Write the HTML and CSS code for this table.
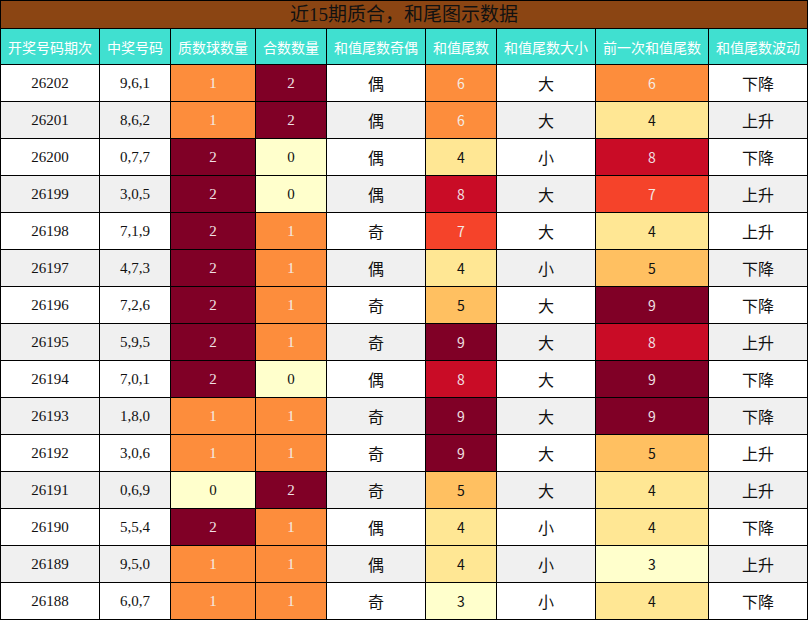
FILE: index.html
```html
<!DOCTYPE html>
<html lang="zh">
<head>
<meta charset="utf-8">
<title>近15期质合，和尾图示数据</title>
<link rel="stylesheet" href="styles.css">
</head>
<body>
<table class="grid">
  <colgroup>
    <col class="w99"><col class="w71"><col class="w85"><col class="w71"><col class="w99"><col class="w71"><col class="w99"><col class="w113"><col class="w99">
  </colgroup>
  <thead>
    <tr class="title-row"><th colspan="9" class="title">近15期质合，和尾图示数据</th></tr>
    <tr class="head-row">
      <th>开奖号码期次</th><th>中奖号码</th><th>质数球数量</th><th>合数数量</th><th>和值尾数奇偶</th><th>和值尾数</th><th>和值尾数大小</th><th>前一次和值尾数</th><th>和值尾数波动</th>
    </tr>
  </thead>
  <tbody>
    <tr><td class="num">26202</td><td class="num">9,6,1</td><td class="num k1">1</td><td class="num k2">2</td><td class="cn">偶</td><td class="dig t6">6</td><td class="cn">大</td><td class="dig t6">6</td><td class="cn">下降</td></tr>
    <tr><td class="num">26201</td><td class="num">8,6,2</td><td class="num k1">1</td><td class="num k2">2</td><td class="cn">偶</td><td class="dig t6">6</td><td class="cn">大</td><td class="dig t4">4</td><td class="cn">上升</td></tr>
    <tr><td class="num">26200</td><td class="num">0,7,7</td><td class="num k2">2</td><td class="num k0">0</td><td class="cn">偶</td><td class="dig t4">4</td><td class="cn">小</td><td class="dig t8">8</td><td class="cn">下降</td></tr>
    <tr><td class="num">26199</td><td class="num">3,0,5</td><td class="num k2">2</td><td class="num k0">0</td><td class="cn">偶</td><td class="dig t8">8</td><td class="cn">大</td><td class="dig t7">7</td><td class="cn">上升</td></tr>
    <tr><td class="num">26198</td><td class="num">7,1,9</td><td class="num k2">2</td><td class="num k1">1</td><td class="cn">奇</td><td class="dig t7">7</td><td class="cn">大</td><td class="dig t4">4</td><td class="cn">上升</td></tr>
    <tr><td class="num">26197</td><td class="num">4,7,3</td><td class="num k2">2</td><td class="num k1">1</td><td class="cn">偶</td><td class="dig t4">4</td><td class="cn">小</td><td class="dig t5">5</td><td class="cn">下降</td></tr>
    <tr><td class="num">26196</td><td class="num">7,2,6</td><td class="num k2">2</td><td class="num k1">1</td><td class="cn">奇</td><td class="dig t5">5</td><td class="cn">大</td><td class="dig t9">9</td><td class="cn">下降</td></tr>
    <tr><td class="num">26195</td><td class="num">5,9,5</td><td class="num k2">2</td><td class="num k1">1</td><td class="cn">奇</td><td class="dig t9">9</td><td class="cn">大</td><td class="dig t8">8</td><td class="cn">上升</td></tr>
    <tr><td class="num">26194</td><td class="num">7,0,1</td><td class="num k2">2</td><td class="num k0">0</td><td class="cn">偶</td><td class="dig t8">8</td><td class="cn">大</td><td class="dig t9">9</td><td class="cn">下降</td></tr>
    <tr><td class="num">26193</td><td class="num">1,8,0</td><td class="num k1">1</td><td class="num k1">1</td><td class="cn">奇</td><td class="dig t9">9</td><td class="cn">大</td><td class="dig t9">9</td><td class="cn">下降</td></tr>
    <tr><td class="num">26192</td><td class="num">3,0,6</td><td class="num k1">1</td><td class="num k1">1</td><td class="cn">奇</td><td class="dig t9">9</td><td class="cn">大</td><td class="dig t5">5</td><td class="cn">上升</td></tr>
    <tr><td class="num">26191</td><td class="num">0,6,9</td><td class="num k0">0</td><td class="num k2">2</td><td class="cn">奇</td><td class="dig t5">5</td><td class="cn">大</td><td class="dig t4">4</td><td class="cn">上升</td></tr>
    <tr><td class="num">26190</td><td class="num">5,5,4</td><td class="num k2">2</td><td class="num k1">1</td><td class="cn">偶</td><td class="dig t4">4</td><td class="cn">小</td><td class="dig t4">4</td><td class="cn">下降</td></tr>
    <tr><td class="num">26189</td><td class="num">9,5,0</td><td class="num k1">1</td><td class="num k1">1</td><td class="cn">偶</td><td class="dig t4">4</td><td class="cn">小</td><td class="dig t3">3</td><td class="cn">上升</td></tr>
    <tr><td class="num">26188</td><td class="num">6,0,7</td><td class="num k1">1</td><td class="num k1">1</td><td class="cn">奇</td><td class="dig t3">3</td><td class="cn">小</td><td class="dig t4">4</td><td class="cn">下降</td></tr>
  </tbody>
</table>
</body>
</html>
```

FILE: styles.css
```css
html, body {
  margin: 0;
  padding: 0;
  background: #ffffff;
}

.grid {
  border-collapse: collapse;
  table-layout: fixed;
  width: 808px;
  font-family: "Liberation Serif", "Noto Sans CJK SC", serif;
  color: #111;
}

.w99 { width: 99px; }
.w71 { width: 71px; }
.w85 { width: 85px; }
.w113 { width: 113px; }

.grid th,
.grid td {
  border: 1px solid #000;
  padding: 0;
  text-align: center;
  vertical-align: middle;
  overflow: hidden;
  white-space: nowrap;
}

.title {
  background: #8b4513;
  height: 27px;
  font-size: 19px;
  font-weight: normal;
  color: #111;
  line-height: 27px;
}

.head-row th {
  background: #40e0d0;
  color: #ffffff;
  height: 35px;
  font-family: "Noto Sans CJK SC", sans-serif;
  font-size: 14px;
  font-weight: normal;
}

.grid tbody td {
  height: 36px;
}

.grid tbody tr:nth-child(even) td {
  background: #f0f0f0;
}

.num {
  font-size: 15px;
}

.cn {
  font-family: "Noto Sans CJK SC", sans-serif;
  font-size: 16px;
  color: #111;
}

.dig {
  font-family: "Noto Sans CJK SC", sans-serif;
  font-size: 14px;
}

.grid tbody tr td.k0 { background: #ffffcc; color: #111; }
.grid tbody tr td.k1 { background: #fd8d3c; color: #f4ece4; }
.grid tbody tr td.k2 { background: #800026; color: #f0e0e4; }

.grid tbody tr td.t3 { background: #ffffcc; color: #111; }
.grid tbody tr td.t4 { background: #ffe794; color: #111; }
.grid tbody tr td.t5 { background: #ffc061; color: #111; }
.grid tbody tr td.t6 { background: #fd8d3c; color: #f4ece4; }
.grid tbody tr td.t7 { background: #f5432a; color: #f4e8e4; }
.grid tbody tr td.t8 { background: #c90c26; color: #f0dde0; }
.grid tbody tr td.t9 { background: #800026; color: #f0e0e4; }
```
